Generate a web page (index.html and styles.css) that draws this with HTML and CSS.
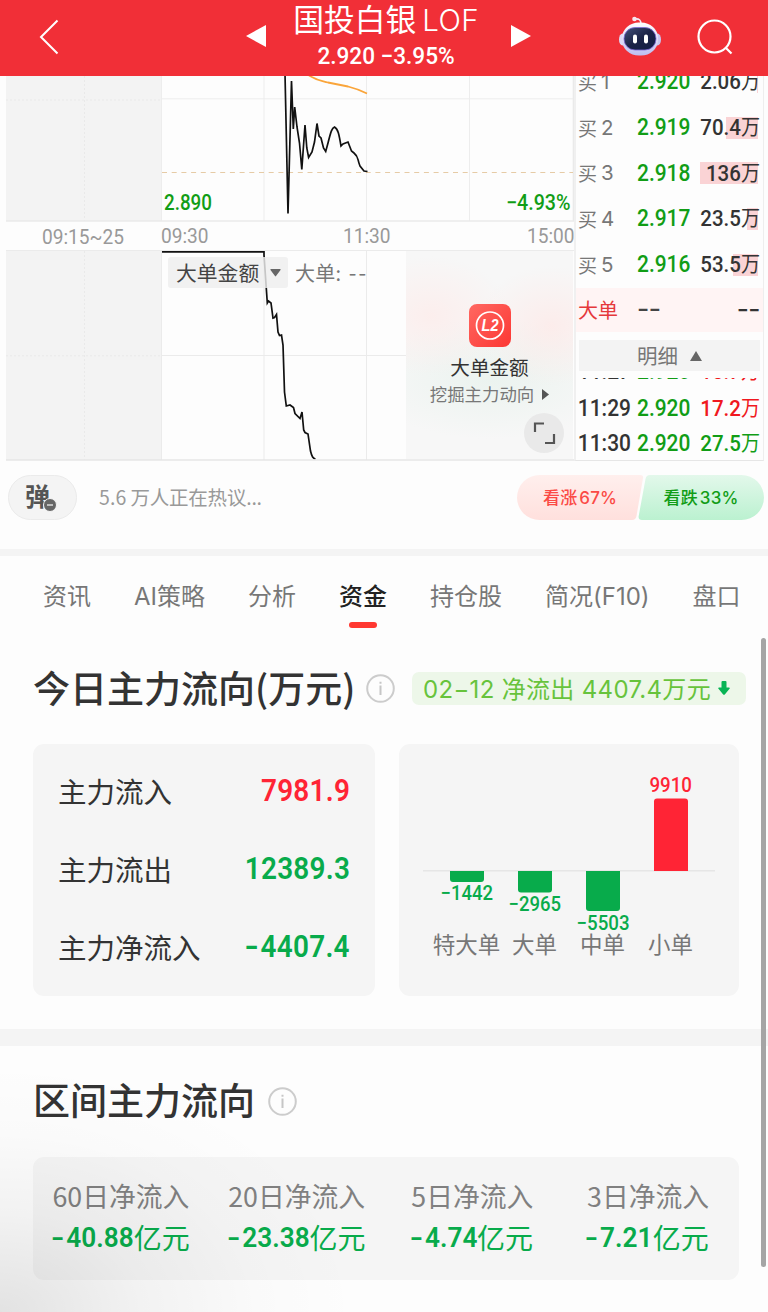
FILE: index.html
```html
<!DOCTYPE html>
<html lang="zh-CN">
<head>
<meta charset="utf-8">
<title>国投白银LOF</title>
<link rel="stylesheet" href="styles.css">
</head>
<body>
<header class="topbar">
  <svg class="back" width="20" height="36" viewBox="0 0 20 36"><path d="M18.500 1.500 2 18l16.500 16.500" fill="none" stroke="#fff" stroke-width="2"/></svg>
  <svg class="prev" width="20" height="22" viewBox="0 0 20 22"><path d="M20 0v22L0 11z" fill="#fff"/></svg>
  <div class="heading">
    <h1>国投白银<span>LOF</span></h1>
    <p class="num">2.920 −3.95%</p>
  </div>
  <svg class="next" width="20" height="22" viewBox="0 0 20 22"><path d="M0 0v22l20-11z" fill="#fff"/></svg>
  <svg class="robot" width="44" height="40" viewBox="0 0 44 40">
    <defs>
      <linearGradient id="shell" x1="0" y1="0" x2="0" y2="1"><stop offset="0" stop-color="#fff"/><stop offset="1" stop-color="#bdbcf0"/></linearGradient>
      <linearGradient id="visor" x1="0" y1="0" x2="1" y2="1"><stop offset="0" stop-color="#43507a"/><stop offset=".5" stop-color="#1b2346"/><stop offset="1" stop-color="#111c46"/></linearGradient>
    </defs>
    <path d="M17 3q6-1 6 5" fill="none" stroke="#f2e8f5" stroke-width="1.600"/>
    <circle cx="16.500" cy="3" r="2.300" fill="#f7e6f0"/>
    <ellipse cx="4.500" cy="23.500" rx="3.500" ry="6" fill="#ddd9f6"/><ellipse cx="39.500" cy="23.500" rx="3.500" ry="6" fill="#c9c6ef"/>
    <rect x="4" y="6.500" width="36" height="33" rx="17" ry="15.500" fill="url(#shell)"/>
    <rect x="6" y="11.500" width="32" height="22.500" rx="11" fill="url(#visor)" stroke="#7f6bd6" stroke-width=".8"/>
    <rect x="15" y="18.500" width="4" height="9" rx="2" fill="#fff"/><rect x="26" y="18.500" width="4" height="9" rx="2" fill="#fff"/>
  </svg>
  <svg class="search" width="36" height="36" viewBox="0 0 36 36"><g fill="none" stroke="#fff" stroke-width="2.200"><circle cx="17.500" cy="17.500" r="16"/><path d="m28.500 28.500 6 6"/></g></svg>
</header>

<main>
<section class="market">
  <div class="charts">
    <svg class="price-chart" viewBox="6 76 568 146" width="568" height="146">
      <rect x="6" y="76" width="155.500" height="145" fill="#f3f3f3"/>
      <path d="M84.500 76v145M6 100h155" stroke="#e9e9e9" stroke-dasharray="2 2" fill="none"/>
      <path d="M161.500 76v145M264 76v145M366.500 76v145M469.500 76v145M162 98.800h411" stroke="#ededed" fill="none"/>
      <path d="M6 221h568" stroke="#eaeaea" stroke-width="1.600"/><path d="M573.500 76v145" stroke="#eaeaea" stroke-width="1.600"/>
      <path d="M162 172.500h411" stroke="#e6cba6" stroke-dasharray="5 4.700"/>
      <path d="M309 75.500c8 5 12 5 19 7l20 4c8 2 13 4 19 7" fill="none" stroke="#faa53a" stroke-width="1.800"/>
      <path d="M285 74 288 213.500 291.500 81 293.300 129 294.700 107 297 127 299.500 143 301.800 169.500 305 125 306.800 148 308.600 157.500 312 152 314.500 142 317 123.500 319 136 321 138 323.500 148 325.700 151.500 328 143C331 131 332 128 334.500 127 338 129 339 134 341 146L343 144 348 142 351.500 151 354 153C359 157 357 159 360 166L364 171 367.500 171.500" fill="none" stroke="#111" stroke-width="1.700"/>
      <text class="chart-num" x="164" y="209.500" textLength="48" lengthAdjust="spacingAndGlyphs">2.890</text>
      <text class="chart-num" x="506" y="209.500" textLength="64.500" lengthAdjust="spacingAndGlyphs">−4.93%</text>
    </svg>
    <div class="times"><span class="t1 num">09:15~25</span><span class="t2 num">09:30</span><span class="t3 num">11:30</span><span class="t4 num">15:00</span></div>
    <div class="volume">
      <svg viewBox="6 250 568 211" width="568" height="211">
        <rect x="6" y="251" width="155.500" height="209" fill="#f3f3f3"/>
        <path d="M84.500 251v209M6 355.800h155" stroke="#e9e9e9" stroke-dasharray="2 2" fill="none"/>
        <path d="M6 250.500h568M161.500 251v209M264 251v209M366.500 251v209M162 355.500h244" stroke="#ebebeb" fill="none"/>
        <path d="M162 251.800H264V255L267.300 303 268.500 301 271 303 273 318 274.500 317.500 276.500 314.500 278 332 279.500 335.500 281.500 335 283 345 284.500 392 286.300 406 290 405 293.500 407.500 295 413.500 300 418.500 302 412 303.700 430 305 432.500 308 434 310.500 451C312 457 313 458.500 315.500 459" fill="none" stroke="#111" stroke-width="1.700"/>
        <path d="M6 460h568" stroke="#e6e6e6" stroke-width="1.600"/>
      </svg>
      <div class="picker"><span>大单金额</span><svg width="11" height="8" viewBox="0 0 11 8"><path d="M1 0h9q1 0 .5 1L6 7q-.5.800-1 0L.5 1Q0 0 1 0" fill="#666"/></svg></div>
      <div class="reading">大单: <span>--</span></div>
      <div class="level2">
        <svg class="l2-icon" width="42" height="43" viewBox="0 0 42 43">
          <defs><linearGradient id="l2bg" x1="0" y1="0" x2="1" y2="1"><stop offset="0" stop-color="#ff6862"/><stop offset="1" stop-color="#fc3733"/></linearGradient></defs>
          <rect width="42" height="43" rx="8" fill="url(#l2bg)"/>
          <circle cx="21" cy="21.500" r="13.500" fill="none" stroke="#fff" stroke-width="1.700"/>
          <text x="12.500" y="27" class="l2-text" textLength="17" lengthAdjust="spacingAndGlyphs">L2</text>
        </svg>
        <strong>大单金额</strong>
        <p>挖掘主力动向<svg width="7" height="11" viewBox="0 0 7 11"><path d="M0 0 7 5.500 0 11z" fill="#555"/></svg></p>
        <svg class="expand" width="40" height="40" viewBox="0 0 40 40"><circle cx="20" cy="20" r="20" fill="#e9e9e9"/><path d="M11 19v-8.500h9M21 30h9v-9" fill="none" stroke="#555" stroke-width="2.200"/></svg>
      </div>
    </div>
  </div>

  <aside class="book">
    <div class="bids">
      <div class="bid"><span class="lv">买<i>1</i></span><b>2.920</b><s style="width:1px"></s><em>2.06<u>万</u></em></div>
      <div class="bid"><span class="lv">买<i>2</i></span><b>2.919</b><s style="width:32px"></s><em>70.4<u>万</u></em></div>
      <div class="bid"><span class="lv">买<i>3</i></span><b>2.918</b><s style="width:58px"></s><em>136<u>万</u></em></div>
      <div class="bid"><span class="lv">买<i>4</i></span><b>2.917</b><s style="width:11px"></s><em>23.5<u>万</u></em></div>
      <div class="bid"><span class="lv">买<i>5</i></span><b>2.916</b><s style="width:25px"></s><em>53.5<u>万</u></em></div>
    </div>
    <div class="block"><span>大单</span><b>−−</b><em>−−</em></div>
    <div class="detail">明细<svg width="12" height="10" viewBox="0 0 12 10"><path d="M6 0l6 10H0z" fill="#666"/></svg></div>
    <div class="ticks">
      <div class="tick"><span>11:27</span><b>2.920</b><em class="up">10.7<u>万</u></em></div>
      <div class="tick"><span>11:29</span><b>2.920</b><em class="up">17.2<u>万</u></em></div>
      <div class="tick"><span>11:30</span><b>2.920</b><em>27.5<u>万</u></em></div>
    </div>
  </aside>
</section>

<section class="chat">
  <div class="bullet"><span>弹</span><svg width="14" height="14" viewBox="0 0 14 14"><circle cx="7" cy="7" r="6.500" fill="#666" stroke="#f4f4f4"/><path d="M4 7h6" stroke="#ddd" stroke-width="1.500"/></svg></div>
  <p>5.6<span>万人正在热议...</span></p>
  <svg class="vote" width="247" height="45" viewBox="0 0 247 45">
    <defs>
      <linearGradient id="bull" x1="0" y1="0" x2="0" y2="1"><stop offset="0" stop-color="#ffefed"/><stop offset="1" stop-color="#ffe0dd"/></linearGradient>
      <linearGradient id="bear" x1="0" y1="0" x2="0" y2="1"><stop offset="0" stop-color="#e3f8eb"/><stop offset="1" stop-color="#bbf1d0"/></linearGradient>
    </defs>
    <path d="M22.500 0H123q3.500 0 3 3l-6.500 38q-.7 4-4.500 4H22.500a22.500 22.500 0 0 1 0-45" fill="url(#bull)"/>
    <path d="M133 0h91.500a22.500 22.500 0 0 1 0 45H125q-4 0-3.300-4L128.500 4q.7-4 4.500-4" fill="url(#bear)"/>
    <text x="26" y="29" class="bull" textLength="74">看涨 67%</text>
    <text x="146.500" y="29" class="bear" textLength="75">看跌 33%</text>
  </svg>
</section>

<nav class="tabs"><a>资讯</a><a>AI策略</a><a>分析</a><a class="active">资金</a><a>持仓股</a><a>简况(F10)</a><a>盘口</a></nav>

<section class="today">
  <div class="title">
    <h2>今日主力流向(万元)</h2>
    <svg class="info" width="29" height="29" viewBox="0 0 29 29"><circle cx="14.500" cy="14.500" r="13.300" fill="none" stroke="#ccc" stroke-width="2"/><path d="M14.500 11.500v9.500M14.500 7.800v2" stroke="#c6c6c6" stroke-width="2"/></svg>
    <div class="badge"><span>02−12 净流出 4407.4万元</span><svg width="12" height="14" viewBox="0 0 12 14"><path d="M3.500 1q0-1 1-1h3q1 0 1 1v5.500H11q1.500 0 .5 1.200l-4.700 5.700q-.8.900-1.600 0L.5 7.700Q-.5 6.500 1 6.500h2.500z" fill="#08b454"/></svg></div>
  </div>
  <div class="cards">
    <dl class="flows card">
      <div><dt>主力流入</dt><dd class="up">7981.9</dd></div>
      <div><dt>主力流出</dt><dd>12389.3</dd></div>
      <div><dt>主力净流入</dt><dd><i class="neg">-</i>4407.4</dd></div>
    </dl>
    <div class="card bars">
      <svg viewBox="399 744 340 252" width="340" height="252">
        <path d="M423 870.700h292" stroke="#e6e6e6" stroke-width="1.500"/>
        <g fill="#08ab4b">
          <path d="M450 871h34v8q0 3-3 3h-28q-3 0-3-3z"/>
          <path d="M518 871h34v18.500q0 3-3 3h-28q-3 0-3-3z"/>
          <path d="M586 871h34v37q0 3-3 3h-28q-3 0-3-3z"/>
        </g>
        <path d="M654 871v-69.500q0-3 3-3h28q3 0 3 3V871z" fill="#ff2435"/>
        <g class="bar-num">
          <text x="440.500" y="900.300" textLength="52.500" lengthAdjust="spacingAndGlyphs">−1442</text>
          <text x="508.500" y="911.300" textLength="52.500" lengthAdjust="spacingAndGlyphs">−2965</text>
          <text x="576.500" y="929.800" textLength="53" lengthAdjust="spacingAndGlyphs">−5503</text>
          <text x="649.500" y="791.500" textLength="42.500" lengthAdjust="spacingAndGlyphs" class="rise">9910</text>
        </g>
        <g class="bar-name"><text x="466.500" y="953">特大单</text><text x="534.500" y="953">大单</text><text x="602.500" y="953">中单</text><text x="670.500" y="953">小单</text></g>
      </svg>
    </div>
  </div>
</section>

<section class="range">
  <div class="title">
    <h2>区间主力流向</h2>
    <svg class="info" width="29" height="29" viewBox="0 0 29 29"><circle cx="14.500" cy="14.500" r="13.300" fill="none" stroke="#ccc" stroke-width="2"/><path d="M14.500 11.500v9.500M14.500 7.800v2" stroke="#c6c6c6" stroke-width="2"/></svg>
  </div>
  <div class="card periods">
    <div><span>60日净流入</span><p><b><i class="neg">-</i>40.88</b>亿元</p></div>
    <div><span>20日净流入</span><p><b><i class="neg">-</i>23.38</b>亿元</p></div>
    <div><span>5日净流入</span><p><b><i class="neg">-</i>4.74</b>亿元</p></div>
    <div><span>3日净流入</span><p><b><i class="neg">-</i>7.21</b>亿元</p></div>
  </div>
</section>
</main>
<div class="shade"></div>
<div class="scrollbar"></div>
</body>
</html>
```

FILE: styles.css
```css
* { box-sizing: border-box; }
body {
  margin: 0; width: 768px; height: 1312px; overflow: hidden; position: relative;
  background: #fdfdfd; color: #333;
  font-family: "Noto Sans CJK SC", sans-serif;
}
h1, h2, p, dl, dd, dt { margin: 0; font-weight: 400; }
i, em { font-style: normal; }
u, s { text-decoration: none; }
svg { display: block; flex: none; }
.num, .book b, .book em, .tick span, .periods b { font-family: Roboto, "Noto Sans CJK SC", sans-serif; }
/* Figures are set in a slightly condensed cut */
.num, .book b, .tick span { transform: scaleX(.91); transform-origin: 0 50%; }

.topbar { height: 76px; background: #f12f37; color: #fff; display: flex; padding-left: 39px; }
.back { margin-top: 19px; }
.prev { margin: 25px 0 0 187px; }
.heading { width: 240px; text-align: center; }
.heading h1 { font-size: 30.800px; line-height: 38px; height: 38px; margin-top: -1px; white-space: nowrap; }
.heading h1 span { font-family: Inter, sans-serif; font-size: 29.500px; font-weight: 300; margin-left: 6px; letter-spacing: .3px; }
.heading p { font-size: 24px; font-weight: 500; line-height: 39px; transform-origin: 50% 50%; transform: scaleX(.94); }
.next { margin: 25px 0 0 4px; }
.prev + .heading { margin-left: 0; margin-right: 1px; }
.robot { margin: 16px 0 0 87px; }
.search { margin: 19px 0 0 35px; }

.market { display: flex; height: 385px; padding-left: 6px; }
.charts { width: 568px; }
.chart-num { font: 500 21.500px Roboto; fill: #119d16; }
.times { display: flex; height: 28px; line-height: 28px; font-size: 21px; color: #999; white-space: nowrap; }
.times span { flex: none; }
.t1 { margin-left: 36px; width: 119px; padding-top: 1px; }
.t2 { width: 182px; }
.t3 { width: 184px; }
.volume { position: relative; height: 211px; }
.picker {
  position: absolute; left: 162px; top: 7px; width: 120px; height: 31px; padding-left: 8px;
  display: flex; align-items: center; gap: 11px; border-radius: 3px;
  background: rgba(238, 238, 238, .82); font-size: 20.800px; line-height: 31px; color: #444;
}
.reading { position: absolute; left: 289px; top: 6px; font-size: 20px; line-height: 31px; color: #777; letter-spacing: .2px; }
.reading span { font-size: 22px; letter-spacing: 2px; margin-left: 3px; }
.level2 {
  position: absolute; left: 400px; top: 1px; width: 167px; height: 208px;
  display: flex; flex-direction: column; align-items: center; padding-top: 53px;
  background:
    radial-gradient(ellipse 80px 60px at 25px 65px, rgba(255, 232, 230, .6), rgba(255, 232, 230, 0)),
    radial-gradient(ellipse 75px 60px at 145px 75px, rgba(255, 229, 227, .6), rgba(255, 229, 227, 0)),
    radial-gradient(ellipse 130px 60px at 85px 128px, rgba(232, 242, 237, .8), rgba(232, 242, 237, 0)),
    #f7f7f7;
}
.l2-text { font: italic 700 16px "Liberation Sans"; fill: #fff; }
.level2 strong { font-size: 19.600px; line-height: 28px; font-weight: 400; color: #333; margin-top: 6px; }
.level2 p { font-size: 17.400px; line-height: 26px; color: #777; display: flex; align-items: center; gap: 8px; }
.level2 .expand { position: absolute; right: 9px; bottom: 6px; }

.book { width: 190px; border-left: 2px solid #f0f0f0; position: relative; overflow: hidden; border-right: 1px solid #eee; border-bottom: 1px solid #e6e6e6; }
.bids { margin-top: -17px; height: 229px; }
.bid { display: flex; height: 45.700px; align-items: center; position: relative; }
.lv { width: 59px; padding-left: 2px; font-size: 19px; color: #777; display: flex; align-items: center; line-height: 28px; }
.lv i { font-family: Inter, sans-serif; font-size: 20.500px; margin-left: 4px; }
.book b { font-size: 23px; font-weight: 500; color: #119d16; width: 56px; margin-left: 2px; flex: none; }
.book em { width: 67px; flex: none; display: flex; justify-content: flex-end; align-items: center; font-size: 22.500px; font-weight: 500; color: #333; position: relative; white-space: nowrap; line-height: 27px; transform: scaleX(.91); transform-origin: 100% 50%; }
.book u { font-size: 21px; font-weight: 400; }
.bid s { position: absolute; right: 5px; top: 12px; height: 22px; background: #fad3d5; }
.block { height: 44px; background: #fff4f4; display: flex; align-items: center; color: #e5383b; font-size: 20px; }
.block span { width: 59px; padding-left: 2px; position: relative; top: -1px; }
.block b { color: #444; }
.detail { margin: 8px 0 0 3px; width: 181px; height: 31px; line-height: 31px; background: #f3f3f3; color: #777; font-size: 20.500px; display: flex; align-items: center; justify-content: center; gap: 12px; }
.ticks { margin-top: 7px; height: 81px; overflow: hidden; }
.tick { height: 35.300px; display: flex; align-items: center; }
.tick:first-child { margin: -24px 0 1.500px; }
.tick span { width: 59px; padding-left: 2px; font-size: 23px; font-weight: 500; }
.book .tick em { color: #119d16; }
.book .tick em.up { color: #f01820; }

.chat { height: 95px; padding: 14px 4px 0 8px; display: flex; border-bottom: 7px solid #f4f4f4; }
.bullet { width: 69px; height: 45px; border: 1px solid #ebebeb; border-radius: 23px; background: #f4f4f4; position: relative; padding-left: 16px; font-size: 25px; line-height: 39px; font-weight: 700; color: #555; }
.bullet svg { position: absolute; left: 34px; top: 22px; }
.chat p { margin-left: 22px; font-size: 19.500px; line-height: 44px; color: #999; width: 418px; letter-spacing: .1px; }
.chat p span { margin-left: 4px; letter-spacing: -.2px; }
.vote text { font: 500 17px Inter, "Noto Sans CJK SC"; word-spacing: -3px; }
.vote .bull { fill: #fb4a45; }
.vote .bear { fill: #119d16; }

.tabs { height: 82px; padding: 19px 0 0 43px; display: flex; gap: 43px; font-family: Inter, "Noto Sans CJK SC", sans-serif; font-size: 24px; line-height: 44px; color: #777; white-space: nowrap; }
.tabs .active { color: #222; font-weight: 500; position: relative; }
.active::after { content: ""; position: absolute; left: 10px; top: 47px; width: 28px; height: 6px; border-radius: 3px; background: #ff3831; }

.title { display: flex; align-items: center; padding-left: 33px; }
.title h2 { font-size: 37px; line-height: 50px; font-weight: 500; color: #333; white-space: nowrap; position: relative; top: -2px; }
.info { margin-left: 11px; position: relative; top: -1px; }
.today .title { height: 60px; margin-top: 20px; }
.badge { margin-left: auto; margin-right: 22px; width: 334px; height: 33px; border-radius: 7px; background: #edf7e9; color: #67c33c; font-family: Inter, "Noto Sans CJK SC", sans-serif; font-size: 24px; line-height: 32px; letter-spacing: .32px; display: flex; align-items: center; padding: 3px 0 0 11px; gap: 7px; white-space: nowrap; position: relative; top: -1px; }
.badge svg { margin-top: -3px; }
.today { height: 408px; border-bottom: 17px solid #f4f4f4; padding-top: 1px; }
.cards { display: flex; gap: 24px; padding-left: 33px; margin-top: 25px; }
.card { background: #f5f5f5; border-radius: 11px; }
.flows { width: 342px; height: 252px; padding: 7px 25px; }
.flows div { height: 78px; display: flex; justify-content: space-between; align-items: center; }
.flows dt { font-size: 28.500px; }
.flows dd { font: 600 31px Roboto, sans-serif; color: #08ab4b; transform: scaleX(.9); transform-origin: 100% 50%; letter-spacing: .3px; }
.flows dd.up { color: #ff2435; }
.neg { display: inline-block; transform: scaleX(1.4); margin-right: 4px; }
.bar-num { font: 500 20.500px Roboto; fill: #08ab4b; }
.bar-num .rise { fill: #ff2435; }
.bar-name { font-size: 22.500px; fill: #777; text-anchor: middle; }

.range .title { height: 56px; margin-top: 27px; }
.range .title .info { top: 0; margin-left: 13px; }
.periods { margin: 28px 0 0 33px; width: 706px; height: 123px; padding: 18px 3px 0 0; display: grid; grid-template-columns: repeat(4, 1fr); text-align: center; }
.periods span { display: block; font-size: 26.800px; line-height: 41px; color: #808080; }
.periods p { font-size: 28px; line-height: 43px; color: #08ab4b; white-space: nowrap; display: flex; justify-content: center; }
.periods b { font-size: 28.500px; font-weight: 600; transform: scaleX(.92); transform-origin: 100% 50%; margin-left: -6px; }
.shade { position: absolute; left: 0; bottom: 0; width: 400px; height: 270px; background: radial-gradient(ellipse 360px 250px at 0 100%, rgba(0, 0, 0, .105), rgba(0, 0, 0, .045) 40%, rgba(0, 0, 0, .012) 72%, transparent); }
.scrollbar { position: absolute; left: 761px; top: 638px; width: 5px; height: 629px; border-radius: 3px; background: #a5a5a5; }
```
